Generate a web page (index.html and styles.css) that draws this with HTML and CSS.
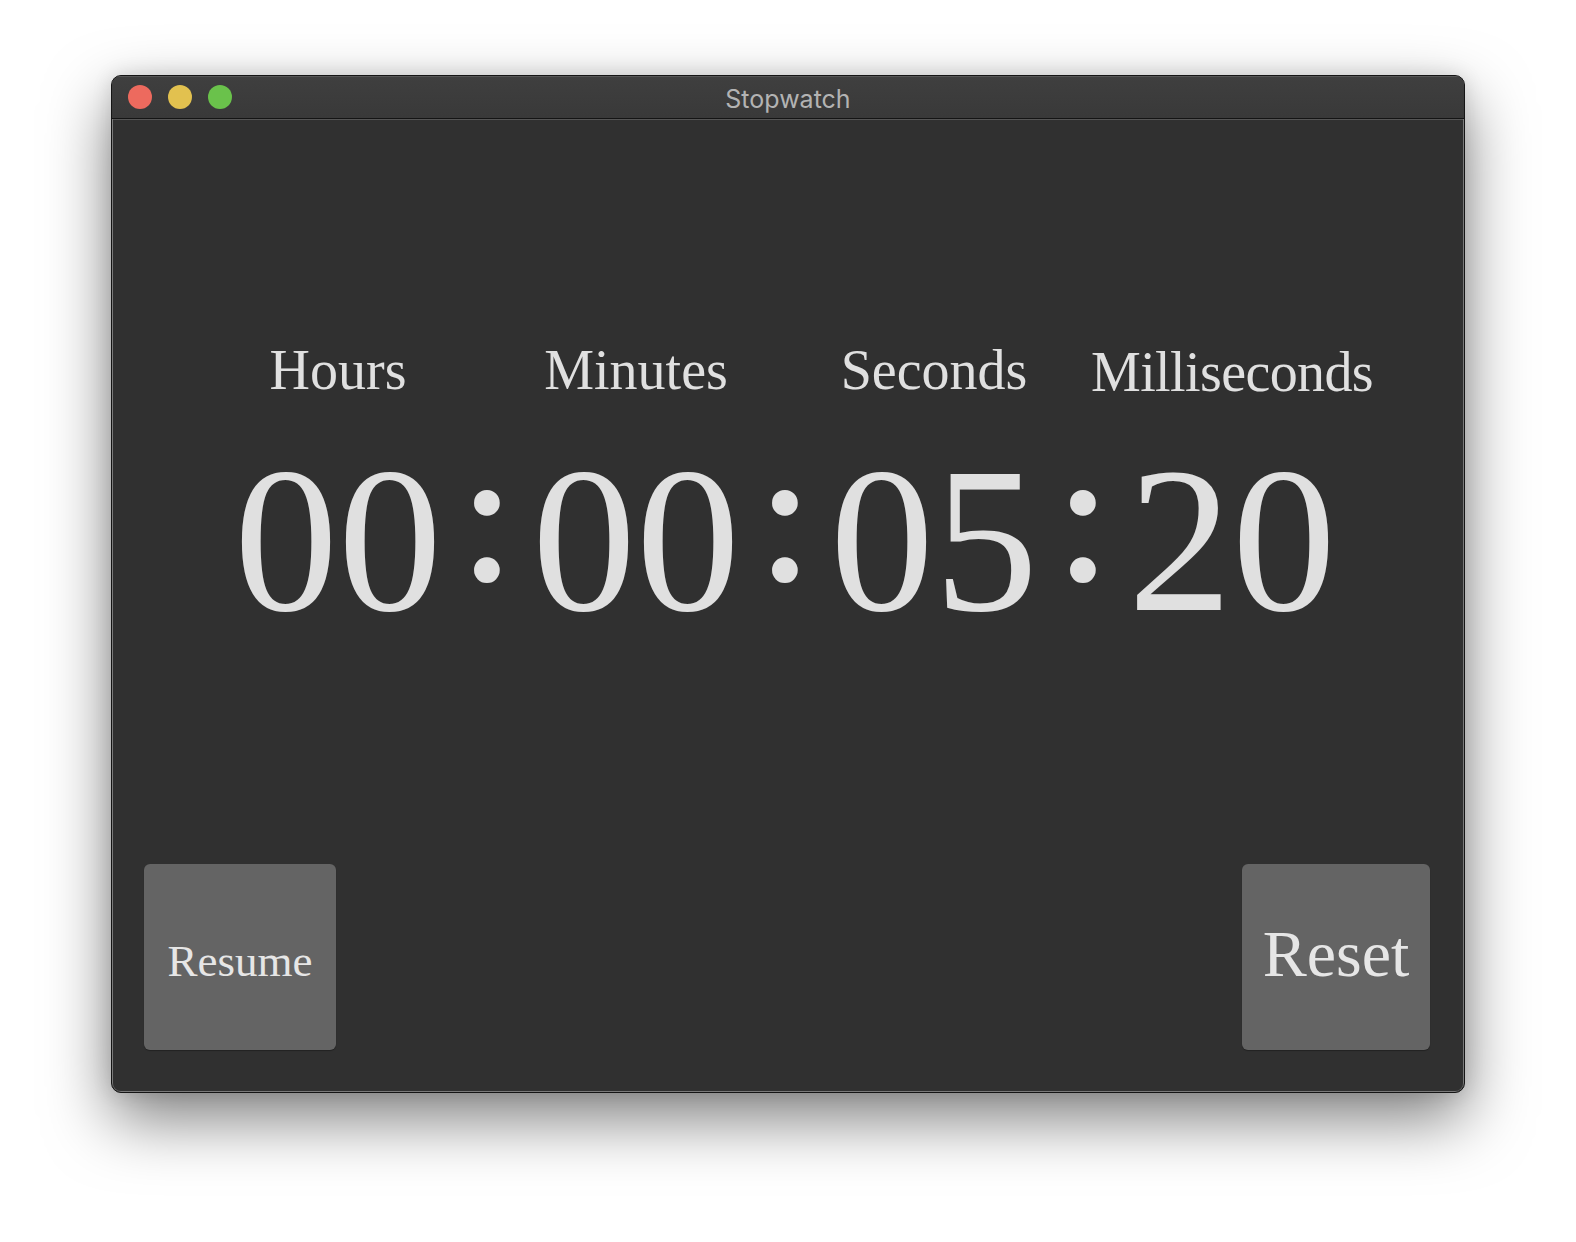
FILE: index.html
```html
<!DOCTYPE html>
<html lang="en">
<head>
<meta charset="utf-8">
<title>Stopwatch</title>
<link rel="stylesheet" href="styles.css">
</head>
<body>
<div class="window">
  <div class="titlebar">
    <div class="lights">
      <span class="light red"></span>
      <span class="light yellow"></span>
      <span class="light green"></span>
    </div>
    <div class="title">Stopwatch</div>
  </div>
  <div class="content">
    <div class="clock">
      <div class="labels">
        <div class="label">Hours</div>
        <div class="label">Minutes</div>
        <div class="label">Seconds</div>
        <div class="label milli">Milliseconds</div>
      </div>
      <div class="digits">
        <div class="num">00</div>
        <div class="sep"><span>:</span></div>
        <div class="num">00</div>
        <div class="sep"><span>:</span></div>
        <div class="num">05</div>
        <div class="sep"><span>:</span></div>
        <div class="num">20</div>
      </div>
    </div>
    <div class="buttons">
      <button class="btn resume">Resume</button>
      <button class="btn reset">Reset</button>
    </div>
  </div>
</div>
</body>
</html>
```
FILE: styles.css
```css
html, body {
  margin: 0;
  padding: 0;
  background: #ffffff;
}
body {
  width: 1576px;
  height: 1242px;
  overflow: hidden;
}
.window {
  box-sizing: border-box;
  margin: 75px 0 0 111px;
  width: 1354px;
  height: 1018px;
  border: 1px solid #151515;
  border-radius: 10px;
  overflow: hidden;
  display: flex;
  flex-direction: column;
  background: #303030;
  box-shadow: inset 0 0 0 1px rgba(255,255,255,0.22), 0 26px 64px rgba(0,0,0,0.5), 0 0 20px rgba(0,0,0,0.12);
}
.titlebar {
  position: relative;
  height: 42px;
  flex: none;
  border-bottom: 1px solid #141414;
  background: linear-gradient(#3f3f3f, #393939);
  box-shadow: inset 0 1px 0 rgba(255,255,255,0.12);
  display: flex;
  align-items: center;
  justify-content: center;
}
.lights {
  position: absolute;
  left: 16px;
  top: 9px;
  display: flex;
  gap: 16px;
}
.light {
  width: 24px;
  height: 24px;
  border-radius: 50%;
  display: block;
}
.red { background: #ed6a5e; }
.yellow { background: #e2c14f; }
.green { background: #6ac24b; }
.title {
  font-family: Inter, "Liberation Sans", sans-serif;
  font-size: 25px;
  color: #b3b3b3;
  line-height: 42px;
  margin: 3px 0 0 0;
}
.content {
  flex: 1;
  display: flex;
  flex-direction: column;
  justify-content: space-between;
  padding: 223px 34px 42px 32px;
  box-shadow: inset 0 0 0 1px rgba(255,255,255,0.18);
}
.clock {
  padding-left: 45px;
  font-family: "Liberation Serif", "Times New Roman", serif;
  color: #e0e0e0;
}
.labels {
  display: flex;
}
.label {
  width: 298px;
  text-align: center;
  font-size: 56px;
  line-height: 56px;
}
.milli {
  letter-spacing: -0.6px;
  padding-top: 2px;
}
.digits {
  display: flex;
  align-items: flex-start;
  margin-top: 36px;
}
.num {
  width: 298px;
  text-align: center;
  font-size: 208px;
  line-height: 208px;
}
.sep {
  width: 0;
  display: flex;
  justify-content: center;
  font-size: 184px;
  line-height: 184px;
  margin-top: -12px;
}
.sep span {
  -webkit-text-stroke: 4px #e0e0e0;
}
.buttons {
  display: flex;
  justify-content: space-between;
  align-items: flex-end;
}
.btn {
  border: none;
  border-radius: 6px;
  background: #646464;
  color: #e6e6e6;
  font-family: "Liberation Serif", "Times New Roman", serif;
  height: 186px;
  display: flex;
  align-items: center;
  justify-content: center;
  line-height: 1;
  box-shadow: 0 1px 1px rgba(0,0,0,0.3);
}
.resume {
  width: 192px;
  font-size: 45px;
  padding: 8px 0 0 0;
}
.reset {
  width: 188px;
  font-size: 66px;
  padding: 0 0 6px 0;
}
```
